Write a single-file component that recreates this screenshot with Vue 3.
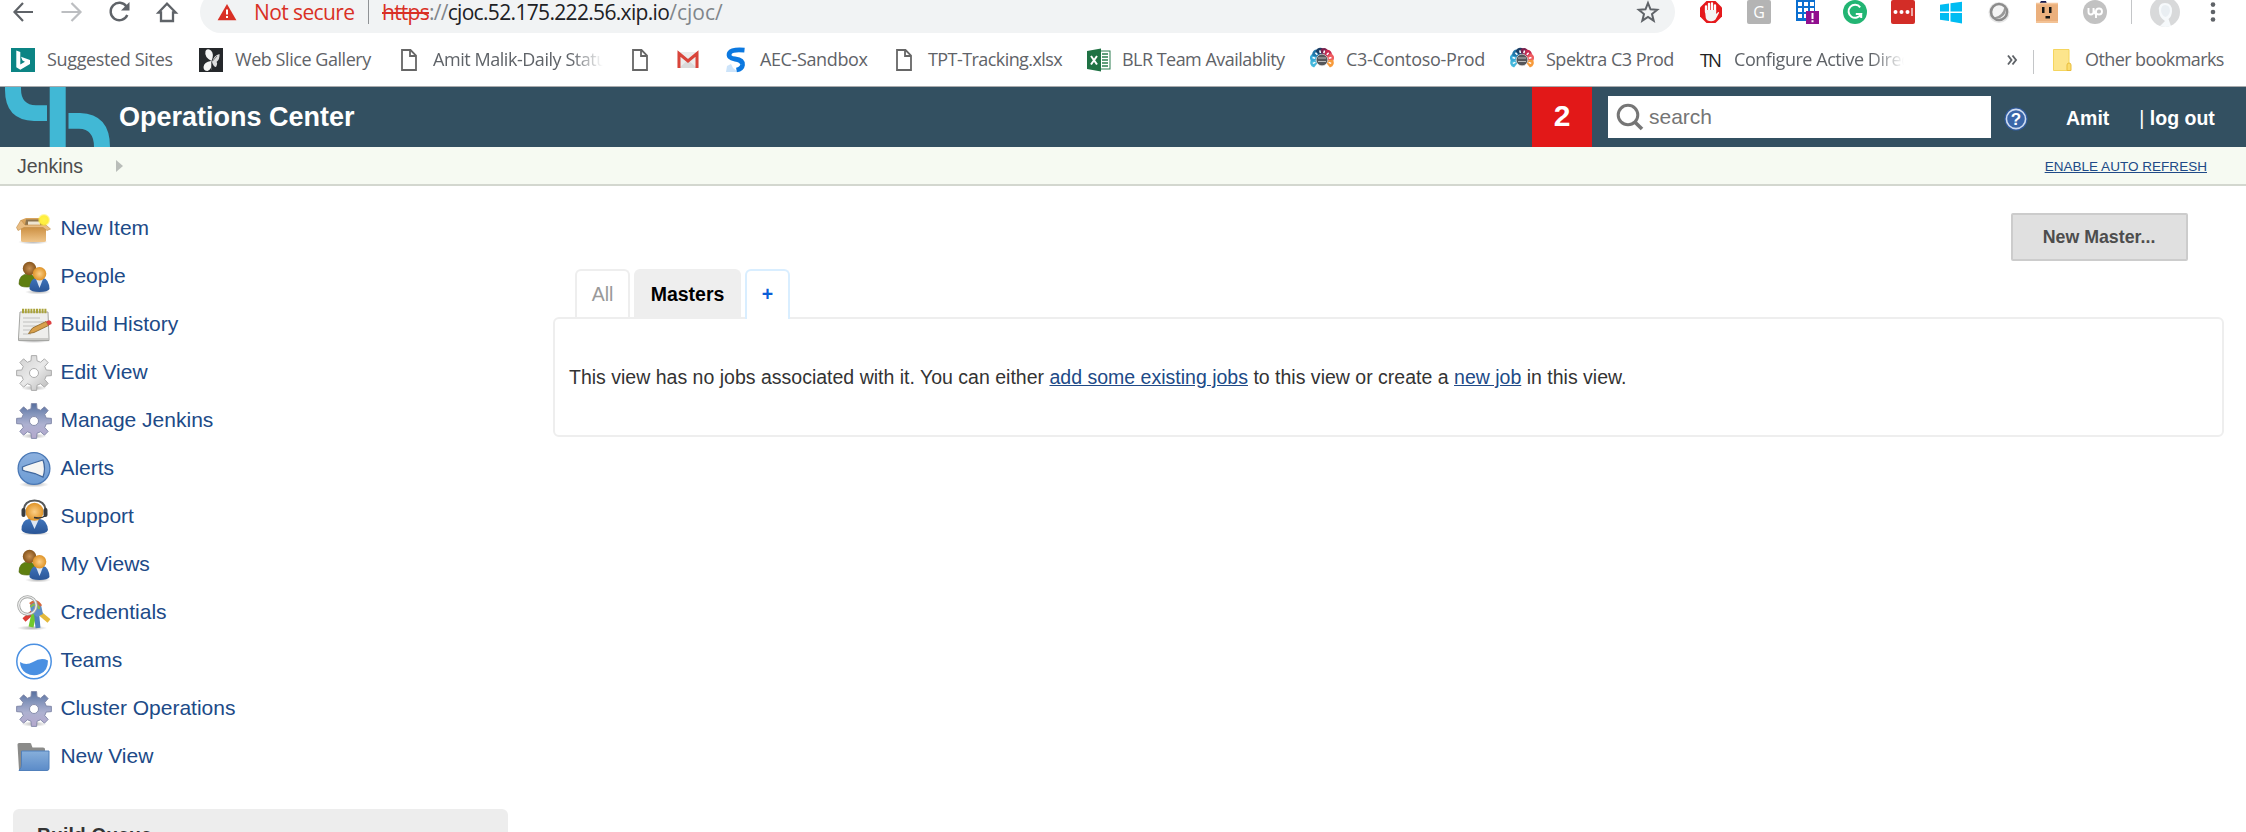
<script setup>
const bookmarks = [
  { icon: 'bing', label: 'Suggested Sites', width: 188, pad: 12, ls: -0.35 },
  { icon: 'butterfly', label: 'Web Slice Gallery', width: 198, pad: 12, ls: -0.45 },
  { icon: 'page', label: 'Amit Malik-Daily Status', width: 231, pad: 12, fade: 170, ls: -0.45 },
  { icon: 'page', label: '', width: 48, pad: 0, ls: 0 },
  { icon: 'gmail', label: '', width: 48, pad: 0, ls: 0 },
  { icon: 'swirl', label: 'AEC-Sandbox', width: 168, pad: 12, ls: -0.38 },
  { icon: 'page', label: 'TPT-Tracking.xlsx', width: 195, pad: 12, ls: -0.57 },
  { icon: 'excel', label: 'BLR Team Availablity', width: 223, pad: 11, ls: -0.53 },
  { icon: 'c3', label: 'C3-Contoso-Prod', width: 200, pad: 12, ls: -0.27 },
  { icon: 'c3', label: 'Spektra C3 Prod', width: 189, pad: 12, ls: -0.5 },
  { icon: 'tn', label: 'Configure Active Directory', width: 306, pad: 11, fade: 170, ls: -0.45 },
]

const tasks = [
  { icon: 'box', label: 'New Item' },
  { icon: 'people', label: 'People' },
  { icon: 'notepad', label: 'Build History' },
  { icon: 'gear', label: 'Edit View', fill: 'url(#gearGrey)', stroke: '#a5a5a5' },
  { icon: 'gear', label: 'Manage Jenkins', fill: 'url(#gearBlue)', stroke: '#7f86a6' },
  { icon: 'alert', label: 'Alerts' },
  { icon: 'support', label: 'Support' },
  { icon: 'people', label: 'My Views' },
  { icon: 'keys', label: 'Credentials' },
  { icon: 'teams', label: 'Teams' },
  { icon: 'gear', label: 'Cluster Operations', fill: 'url(#gearBlue)', stroke: '#7f86a6' },
  { icon: 'folder', label: 'New View' },
]

function gearPath() {
  const pts = []
  for (let i = 0; i < 8; i++) {
    const a = (i * Math.PI) / 4 - Math.PI / 2
    for (const [d, r] of [[-0.24, 12.6], [-0.15, 17.6], [0.15, 17.6], [0.24, 12.6]]) {
      pts.push(`${(18 + r * Math.cos(a + d)).toFixed(2)} ${(18 + r * Math.sin(a + d)).toFixed(2)}`)
    }
  }
  return `M${pts.join('L')}ZM22.5 18A4.5 4.5 0 1 0 13.5 18A4.5 4.5 0 1 0 22.5 18Z`
}
const gear = gearPath()
const petals = [
  [-110, '#45b8dc'], [-75, '#36a9d8'], [-42, '#2176a8'], [-13, '#1b3f66'],
  [15, '#7a1f4c'], [43, '#c52850'], [75, '#ef5a5f'], [110, '#f79a3a'],
]
</script>

<template>
  <div class="window">
    <svg class="defs" width="0" height="0">
      <defs>
        <linearGradient id="gearGrey" x1="0" y1="0" x2="1" y2="1"><stop offset="0" stop-color="#cfcfcf" /><stop offset=".5" stop-color="#e9e9e9" /><stop offset="1" stop-color="#b5b5b5" /></linearGradient>
        <linearGradient id="gearBlue" x1="0" y1="0" x2="0" y2="1"><stop offset="0" stop-color="#566f9f" /><stop offset=".28" stop-color="#8293ba" /><stop offset=".6" stop-color="#adb1d0" /><stop offset="1" stop-color="#b5a8cd" /></linearGradient>
        <linearGradient id="boxFront" x1="0" y1="0" x2="0" y2="1"><stop offset="0" stop-color="#c98b3c" /><stop offset="1" stop-color="#efc58a" /></linearGradient>
        <linearGradient id="suit" x1="0" y1="0" x2="0" y2="1"><stop offset="0" stop-color="#3f74bb" /><stop offset="1" stop-color="#2a5596" /></linearGradient>
        <linearGradient id="folderFront" x1="0" y1="0" x2="0" y2="1"><stop offset="0" stop-color="#87afdb" /><stop offset="1" stop-color="#5b8bc8" /></linearGradient>
        <linearGradient id="alertBlue" x1="0" y1="0" x2="0" y2="1"><stop offset="0" stop-color="#8db1df" /><stop offset="1" stop-color="#6d9cd4" /></linearGradient>
        <radialGradient id="skin"><stop offset="0" stop-color="#fccf86" /><stop offset="1" stop-color="#df9327" /></radialGradient>
        <radialGradient id="skinDark"><stop offset="0" stop-color="#c89154" /><stop offset="1" stop-color="#87551c" /></radialGradient>
        <radialGradient id="spark"><stop offset="0" stop-color="#fff34a" /><stop offset=".65" stop-color="#ffee3c" /><stop offset="1" stop-color="#ffee3c" stop-opacity="0" /></radialGradient>
        <radialGradient id="shade"><stop offset="0" stop-color="#000" stop-opacity=".3" /><stop offset="1" stop-color="#000" stop-opacity="0" /></radialGradient>
      </defs>
    </svg>

    <div class="toolbar">
      <div class="nav">
        <svg viewBox="0 0 24 24"><path d="M22 12H4M12 3L3.500 12L12 21" fill="none" stroke="#5f6368" stroke-width="2.200" /></svg>
        <svg viewBox="0 0 24 24"><path d="M2.500 12H21M12.500 3L21.500 12L12.500 21" fill="none" stroke="#bcbec1" stroke-width="2.200" /></svg>
        <svg viewBox="0 0 24 24"><path d="M19.500 6.500A8.700 8.700 0 1 0 20.300 15" fill="none" stroke="#5f6368" stroke-width="2.400" /><path d="M22.500 2V10.500H14Z" fill="#5f6368" /></svg>
        <svg viewBox="0 0 24 24"><path d="M3.500 12.500H6V21H18V12.500H20.700L12 3.700Z" fill="none" stroke="#5f6368" stroke-width="2.300" /></svg>
      </div>
      <div class="omnibox">
        <svg class="warn" viewBox="0 0 20 18" width="20" height="18"><path d="M10 1L19.400 17.200H.6Z" fill="#d93025" /><path d="M10 6.500V11.500M10 13V15" stroke="#fff" stroke-width="2" /></svg>
        <span class="insecure">Not secure</span>
        <i class="sep"></i>
        <span class="url"><s>https</s><span class="dim protocol">://</span><span class="host">cjoc.52.175.222.56.xip.io</span><span class="dim path">/cjoc/</span></span>
        <svg class="star" viewBox="0 0 24 24" width="24" height="24"><path d="M12 3L14.500 9.300L21.200 9.800L16 14.100L17.700 20.700L12 17L6.300 20.700L8 14.100L2.800 9.800L9.500 9.300Z" fill="none" stroke="#5f6368" stroke-width="2" /></svg>
      </div>
      <div class="extensions">
        <svg viewBox="0 0 24 24"><path d="M7.500 1H16.500L23 7.500V16.500L16.500 23H7.500L1 16.500V7.500Z" fill="#e5191c" /><path d="M7 12V6.500M10 11V4M13 11V3.500M16 12V5.500" stroke="#fff" stroke-width="2.300" stroke-linecap="round" /><path d="M5.900 10H17.100V14L19 12.200Q20.300 11.600 20 13L16.500 19.500Q15 21.500 12 21.300Q8 21.300 6.800 18Z" fill="#f4f4f4" /></svg>
        <svg viewBox="0 0 24 24"><rect width="24" height="24" rx="2" fill="#b4b4b4" /><text x="12" y="18" text-anchor="middle" font-size="16" fill="#fff">G</text></svg>
        <svg viewBox="0 0 24 24"><rect x="1" y="-2" width="19" height="23" fill="#0b6fd0" /><path d="M3 2H7V6H3ZM9 2H13V6H9ZM15 2H19V6H15ZM3 8H7V12H3ZM9 8H13V12H9ZM15 8H19V12H15ZM3 14H7V18H3ZM9 14H13V18H9Z" fill="#fff" /><rect x="11" y="11" width="13" height="13" fill="#90108f" /><path d="M17.500 13V19M17.500 20.300V22.300" stroke="#fff" stroke-width="2" /></svg>
        <svg viewBox="0 0 24 24"><circle cx="12" cy="12" r="12" fill="#22b573" /><path d="M17.200 7.300A6.500 6.500 0 1 0 18 14H12.800M18.200 18V14" fill="none" stroke="#fff" stroke-width="2" /></svg>
        <svg viewBox="0 0 24 24"><rect width="24" height="24" rx="2" fill="#d32d27" /><circle cx="4.500" cy="12" r="2" fill="#fff" /><circle cx="10.500" cy="12" r="2" fill="#fff" /><circle cx="16.500" cy="12" r="2" fill="#fff" /><path d="M21 8V16" stroke="#fff" stroke-width="1.200" /></svg>
        <svg viewBox="0 0 24 24"><path d="M1 4.800L10 3.500V11.500H1ZM11.500 3.300L23 1.800V11.500H11.500ZM1 13H10V21L1 19.800ZM11.500 13H23V23.500L11.500 21.500Z" fill="#00bcf2" /></svg>
        <svg viewBox="0 0 24 24"><circle cx="12" cy="12.500" r="10.500" fill="#e6e6e6" /><circle cx="12" cy="12" r="8" fill="#f4f4f4" stroke="#8c8c8c" stroke-width="2.600" /><path d="M17.500 6.500A8 8 0 0 1 7 17.500Q16 16 17.500 6.500Z" fill="#999" /></svg>
        <svg viewBox="0 0 24 24"><path d="M4 4L6 1H11L12 4Z" fill="#15184f" /><rect x="1" y="3.500" width="22" height="19.500" fill="#ebb07d" /><path d="M1 3.500H23M1 22H23" stroke="#f6c79d" stroke-width="1.500" /><path d="M7 7H9.500V13H7ZM14 7H16.500V13H14ZM10.500 16H15V18.500H10.500Z" fill="#151515" /></svg>
        <svg viewBox="0 0 24 24"><circle cx="12" cy="12" r="12" fill="#c2c2c2" /><path d="M5.500 8V12A2.500 2.500 0 0 0 10.500 12V8Q11 13.500 13 14.500M13 18V11.500A3 3 0 1 1 16 14.500Q14 14.500 13 13" fill="none" stroke="#fff" stroke-width="1.900" /></svg>
      </div>
      <i class="sep ext-sep"></i>
      <svg class="avatar" viewBox="0 0 30 30" width="30" height="30"><circle cx="15" cy="15" r="15" fill="#d8d9da" /><path d="M9 14Q8 6 15 6Q22 6 22 14Q22 19 18.500 22L21 29Q15 31 10 29L15 24Q9 20 9 14Z" fill="#f6f9fb" /><path d="M11 14Q11 8 15 8Q20 8 20 14Q19 19 15.500 20Q12 19 11 14Z" fill="#e9eef2" /></svg>
      <svg class="dots" viewBox="0 0 6 24" width="6" height="24"><g fill="#5f6368"><circle cx="3" cy="4.600" r="2.300" /><circle cx="3" cy="12" r="2.300" /><circle cx="3" cy="19.500" r="2.300" /></g></svg>
    </div>

    <div class="bookmarks">
      <div v-for="(b, i) in bookmarks" :key="i" class="bookmark" :style="{ width: b.width + 'px', gap: b.pad + 'px' }">
        <svg class="favicon" viewBox="0 0 24 24">
          <template v-if="b.icon === 'bing'"><rect width="24" height="24" fill="#0c8484" /><path d="M5.300 2.500L9.300 4V16.500L14 13.800L11.500 12.600L10 8.800L19 12V16L9.300 21.700L5.300 19.300Z" fill="#fff" /></template>
          <template v-else-if="b.icon === 'butterfly'"><rect width="24" height="24" fill="#25282b" /><path d="M12.500 13Q5 9 6.500 3Q8 0 12 2.500Q15.500 6 12.500 13ZM12 13Q5 14 4.500 19Q4.500 23 8.500 23Q13.500 21 12.500 13Z" fill="#f4f4f4" /><path d="M13 14Q15 7 20.500 6Q21 11 17.500 14Q19 15 17 19Q14.500 19 13 14Z" fill="#ddd" /><path d="M13.500 13L18 8M12.500 14V22" stroke="#555" stroke-width=".8" /></template>
          <path v-else-if="b.icon === 'page'" d="M5 2H13.500L19 7.500V22H5ZM13 2.500V8H18.500" fill="none" stroke="#666" stroke-width="1.800" />
          <template v-else-if="b.icon === 'gmail'"><rect x="1.500" y="4" width="21" height="16" rx="1.500" fill="#ececec" /><path d="M3 20L12 12L21 20Z" fill="#dadada" /><path d="M3 20V5.500L12 13L21 5.500V20" fill="none" stroke="#d9443a" stroke-width="3" /></template>
          <template v-else-if="b.icon === 'swirl'"><path d="M2 24L3 18L7 16L9 20L14 24Z" fill="#cde4fa" /><path d="M20.500 2.200Q8 1 5.500 5Q3.500 10 11 11Q19 12 18.500 17Q18 21 12.500 22" fill="none" stroke="#0b78e0" stroke-width="4.800" /></template>
          <template v-else-if="b.icon === 'excel'"><rect x="12" y="3" width="11" height="18" fill="#fff" stroke="#2c7d50" /><path d="M15 6H21M15 9H21M15 12H21M15 15H21M15 18H21" stroke="#2c7d50" stroke-width="1.700" /><path d="M0 3L14 .5V23.500L0 21Z" fill="#1f7244" /><path d="M4 8L10 16.500M10 8L4 16.500" stroke="#fff" stroke-width="2" /></template>
          <g v-else-if="b.icon === 'c3'" transform="translate(12 12)">
            <path v-for="p in petals" :key="p[0]" d="M0 -3L-4.300 -10Q0 -14.800 4.300 -10Z" :fill="p[1]" :transform="`rotate(${p[0]})`" />
            <path v-for="p in petals" :key="'d' + p[0]" d="M0 -7V-9.800" stroke="#fff" stroke-width="1.500" :transform="`rotate(${p[0]})`" />
            <circle r="5.800" fill="#55565a" stroke="#ddd" stroke-width=".7" /><path d="M-4 -2H4M-4 1.500H4" stroke="#bbb" />
          </g>
          <text v-else x="12" y="18.500" text-anchor="middle" font-size="18.500" fill="#222" textLength="22">TN</text>
        </svg>
        <span v-if="b.label" class="label" :class="{ fade: b.fade }" :style="{ letterSpacing: b.ls + 'px' }">{{ b.label }}</span>
      </div>
      <svg class="more" viewBox="0 0 12 12" width="12" height="12"><path d="M2 1.500L5.500 6L2 10.500M6.500 1.500L10 6L6.500 10.500" fill="none" stroke="#5f6368" stroke-width="1.900" /></svg>
      <i class="sep bm-sep"></i>
      <svg class="folder" viewBox="0 0 20 24" width="20" height="24"><path d="M1.500 1.500H17V22.500H1.500Z" fill="#fde58c" stroke="#f5d55e" /><path d="M15 22.500V17Q15 15 17 15Q19 15 19 17V22.500Z" fill="#fbdc6d" stroke="#e9bd3c" /></svg>
      <span class="label other">Other bookmarks</span>
    </div>

    <header class="header">
      <svg class="logo" viewBox="0 0 120 60" width="120" height="60"><g fill="#41b8d5"><path d="M5 0H21V2Q21 18 36 18.300H47V34H34Q5 33 5 3Z" /><rect x="49.700" width="16" height="60" /><path d="M68.500 26H80Q110 27 110 60H94Q94 42 79 41.700H68.500Z" /></g></svg>
      <span class="title">Operations Center</span>
      <span class="count">2</span>
      <div class="search">
        <svg viewBox="0 0 28 28" width="28" height="28"><circle cx="12" cy="12" r="9.800" fill="none" stroke="#767676" stroke-width="3" /><path d="M18.800 19L26 26" stroke="#767676" stroke-width="3.700" /></svg>
        <span>search</span>
      </div>
      <svg class="help" viewBox="0 0 24 24" width="24" height="24"><circle cx="12" cy="12" r="11.500" fill="#315b9d" /><circle cx="12" cy="12" r="9.600" fill="#3a66a8" stroke="#cfdcf0" stroke-width="1.600" /><text x="12" y="18" text-anchor="middle" font-size="17" font-weight="bold" fill="#fff">?</text></svg>
      <span class="user">Amit</span>
      <span class="logout"><span class="bar">|</span> log out</span>
    </header>

    <div class="crumbs">
      <span class="crumb">Jenkins</span>
      <svg viewBox="0 0 7 12" width="7" height="12"><path d="M0 0L7 6L0 12Z" fill="#b9bdb9" /></svg>
      <a class="refresh">ENABLE AUTO REFRESH</a>
    </div>

    <div class="body">
      <aside class="side">
        <a v-for="t in tasks" :key="t.label" class="task">
          <svg viewBox="0 0 36 36" width="36" height="36">
            <template v-if="t.icon === 'box'">
              <ellipse cx="17" cy="31" rx="15" ry="2.500" fill="url(#shade)" />
              <path d="M5 9L10 7H26L30 10V16H5Z" fill="#d9a45d" /><path d="M10 8.500H26L27 14H9Z" fill="#8d744f" /><path d="M12 10.500H24V14H12Z" fill="#eee4d0" />
              <path d="M5 15H30V29.500Q30 31 28 31H7Q5 31 5 29.500Z" fill="url(#boxFront)" /><path d="M5 9L9 14H30L34.500 18L31 19.500L27 16.500H8L2 19.500L.5 16.500Z" fill="#e9bd82" stroke="#c08b48" stroke-width=".6" />
              <circle cx="28" cy="9" r="6.500" fill="url(#spark)" />
            </template>
            <template v-else-if="t.icon === 'people'">
              <ellipse cx="22" cy="33" rx="13" ry="2.500" fill="url(#shade)" />
              <path d="M3 25Q3 15 12 15Q20 15 20 25Q19 28 11 28Q4 28 3 25Z" fill="#5f7f10" stroke="#4b6508" stroke-width=".6" /><circle cx="13.500" cy="9.500" r="6.700" fill="url(#skinDark)" />
              <path d="M13.500 30Q13.500 20 20 19H27Q33 20 33.500 30Q32 33 23.500 33Q15 33 13.500 30Z" fill="url(#suit)" /><path d="M20 20H27L23.500 29Z" fill="#dce6f4" /><circle cx="23.500" cy="14.800" r="6.800" fill="url(#skin)" />
            </template>
            <template v-else-if="t.icon === 'notepad'">
              <ellipse cx="18" cy="34" rx="17" ry="2" fill="url(#shade)" />
              <path d="M4 5H32L33 31V33.500H2.500V31Z" fill="#eeeeec" stroke="#a5a6a3" /><path d="M3 32H33" stroke="#bdbdba" stroke-width="1.500" /><path d="M6 4H31" stroke="#aaa33b" stroke-width="4.500" stroke-dasharray="2 .8" />
              <path d="M7 11H24M7 15H28M7 19H22M7 23H17M7 27H15" stroke="#c0c0be" stroke-width="1.200" />
              <path d="M12.500 26.500L16.500 21L30 14.500L32.500 18.500L18 25.500Z" fill="#d8a04c" stroke="#8c6221" stroke-width=".8" /><path d="M30 14.500L33 13.200Q36 14 35.500 17L32.500 18.500Z" fill="#dd4141" />
            </template>
            <template v-else-if="t.icon === 'gear'">
              <ellipse cx="18" cy="33" rx="13" ry="2.800" fill="url(#shade)" />
              <path :d="gear" :fill="t.fill" :stroke="t.stroke" stroke-width=".9" stroke-linejoin="round" fill-rule="evenodd" />
            </template>
            <template v-else-if="t.icon === 'alert'">
              <ellipse cx="18" cy="33.500" rx="15" ry="3" fill="url(#shade)" />
              <circle cx="18" cy="17.500" r="15.900" fill="url(#alertBlue)" stroke="#4a78b5" stroke-width="1.300" /><path d="M6.500 16L10 14.500L19 11.500L27 9Q30 17.500 27 26L19 22.500L10 20.500L6.500 19Z" fill="#f5f5f3" stroke="#41689e" stroke-width="1.300" />
            </template>
            <template v-else-if="t.icon === 'support'">
              <ellipse cx="19" cy="34.500" rx="15" ry="2" fill="url(#shade)" />
              <path d="M5.500 31Q5.500 21 13 20H24Q31 21 32 31Q31 35 19 35Q7 35 5.500 31Z" fill="url(#suit)" /><path d="M14.500 21H22.500L18.500 30Z" fill="#dce6f4" /><circle cx="18.500" cy="12.800" r="9" fill="url(#skin)" />
              <path d="M7.500 12Q8 1.500 18.500 1.500Q29 1.500 30 12" fill="none" stroke="#55585a" stroke-width="2" /><rect x="5.500" y="9" width="4" height="9" rx="2" fill="#3a3c3e" /><rect x="27.500" y="9" width="4" height="9" rx="2" fill="#3a3c3e" /><path d="M29 17Q25 20 18 18.500" fill="none" stroke="#333" stroke-width="1.500" />
            </template>
            <template v-else-if="t.icon === 'keys'">
              <ellipse cx="16" cy="33" rx="15" ry="2.500" fill="url(#shade)" />
              <path d="M18 16L8 25" stroke="#dc3d36" stroke-width="4.500" /><path d="M20 15L33 26" stroke="#e4b93b" stroke-width="4.500" />
              <path d="M19 14L15 32" stroke="#71c82d" stroke-width="5" /><path d="M20 13L22 33" stroke="#4d7fbd" stroke-width="5" />
              <path d="M14 10Q19 3 25 10L27 19L21 22L15 17Z" fill="#5e8dc8" /><path d="M14 9Q20 3 25 11" fill="none" stroke="#d76a3c" stroke-width="2.500" /><path d="M14.500 12Q20 6 23.500 14" fill="none" stroke="#8abd48" stroke-width="2" />
              <circle cx="11.500" cy="10.500" r="8.800" fill="none" stroke="#a3a5a3" stroke-width="3" /><circle cx="11.500" cy="10.500" r="8.800" fill="none" stroke="#eee" stroke-width="1.300" />
            </template>
            <template v-else-if="t.icon === 'teams'">
              <circle cx="18" cy="18.500" r="17.200" fill="#fff" stroke="#4a90e2" stroke-width="1.500" /><path d="M4 19Q10 23 17 19Q25 14 32 17.500Q32 28 24 31Q17 34 10 30Q4 26 4 19Z" fill="#4a90e2" />
            </template>
            <template v-else>
              <path d="M1.500 5.500Q1.500 4 3 4H14Q15.500 4 15.500 6L16.500 8.500H27Q29 8.500 29 10V31H3Z" fill="#8b8b89" /><path d="M5.500 12H33V29.500Q33 31.500 31 31.500H3Q5.500 29 5.500 26Z" fill="url(#folderFront)" stroke="#5180bb" />
            </template>
          </svg>
          <span>{{ t.label }}</span>
        </a>
        <div class="queue">Build Queue</div>
      </aside>

      <main class="main">
        <button class="new-master">New Master...</button>
        <div class="tabs">
          <a class="tab all">All</a>
          <a class="tab active">Masters</a>
          <a class="tab add">+</a>
        </div>
        <div class="panel">This view has no jobs associated with it. You can either <a>add some existing jobs</a> to this view or create a <a>new job</a> in this view.</div>
      </main>
    </div>
  </div>
</template>

<style>
body { margin: 0; background: #fff; overflow: hidden; }
</style>

<style scoped>
* { box-sizing: border-box; }
.window { display: flex; flex-direction: column; width: 2246px; height: 832px; overflow: hidden; background: #fff; font-family: "Liberation Sans", Arial, sans-serif; font-size: 19.5px; color: #333; white-space: nowrap; }
.defs { position: absolute; }
svg { flex: none; display: block; overflow: visible; }
.sep { flex: none; width: 1px; height: 24px; background: #c4c6c8; }

.toolbar { display: flex; align-items: center; height: 42px; margin-top: -9px; flex: none; font-family: "Open Sans", "Noto Sans", sans-serif; }
.nav { display: flex; width: 200px; padding-left: 10.5px; gap: 24.2px; }
.nav svg, .extensions svg { width: 24px; height: 24px; }
.omnibox { display: flex; align-items: center; width: 1475px; height: 42px; border-radius: 21px; background: #f1f3f4; padding: 0 15px 0 17px; font-size: 21px; line-height: 42px; }
.insecure { width: 113px; margin-left: 17px; color: #d93025; letter-spacing: -0.6px; }
.omnibox .sep { background: #8f9295; margin-left: 1px; }
.url { margin-left: 13px; letter-spacing: -0.75px; color: #202124; }
.url s { color: #d93025; }
.dim { color: #80868b; }
.host { letter-spacing: -0.67px; }
.path { letter-spacing: 0; }
.star { margin-left: auto; }
.extensions { display: flex; gap: 24px; margin-left: 24px; }
.ext-sep { margin-left: 24px; }
.avatar { margin-left: 18px; }
.dots { margin-left: 30px; }

.bookmarks { display: flex; align-items: center; flex: none; height: 54px; padding: 0 0 0 11px; border-bottom: 1px solid #a9abad; font-family: "Open Sans", "Noto Sans", sans-serif; font-size: 18px; color: #5f6368; }
.bookmark { display: flex; align-items: center; flex: none; }
.favicon { width: 24px; height: 24px; }
.label { line-height: 26px; margin-bottom: 2px; }
.fade { width: 170px; overflow: hidden; mask-image: linear-gradient(to right, #000 138px, transparent 170px); }
.more { margin-left: 1px; }
.bm-sep { margin-left: 15px; position: relative; top: 2px; }
.folder { margin-left: 18px; }
.other { margin-left: 13px; letter-spacing: -0.6px; }

.header { display: flex; align-items: center; flex: none; height: 60px; background: #335061; color: #fff; font-weight: bold; }
.title { width: 1413px; margin-left: -1px; font-size: 27px; line-height: 60px; }
.count { width: 60px; line-height: 58px; height: 60px; background: #e21818; text-align: center; font-size: 30px; }
.search { display: flex; align-items: center; width: 383px; height: 42px; margin-left: 16px; padding-left: 8px; gap: 5px; background: #fff; color: #757575; font-size: 21px; font-weight: normal; }
.help { margin-left: 13px; position: relative; top: 2px; }
.user { margin-left: 38px; padding-top: 3px; }
.logout { margin-left: 30px; padding-top: 3px; }
.bar { font-weight: normal; }

.crumbs { display: flex; align-items: center; flex: none; height: 39px; padding: 0 39px 0 17px; background: #f6faf2; border-bottom: 2px solid #d3d7cf; color: #4d4d4d; }
.crumb { padding-top: 1px; }
.crumbs svg { margin-left: 33px; }
.refresh { margin-left: auto; padding-top: 2px; font-size: 13.55px; color: #204a87; text-decoration: underline; }

.body { display: flex; flex: 1; min-height: 0; }
.side { display: flex; flex-direction: column; width: 553px; padding: 25px 45px 0 13px; }
.task { display: flex; align-items: center; flex: none; height: 36px; margin-bottom: 12px; padding-left: 3px; gap: 8.4px; font-size: 21px; line-height: 30px; color: #204a87; }
.task span { margin-top: -3px; }
.queue { flex: none; height: 60px; margin-top: 22px; padding: 14px 24px; border-radius: 6px; background: #ededed; font-weight: bold; line-height: 24px; }
.main { display: flex; flex-direction: column; width: 1671px; padding-top: 27px; }
.new-master { align-self: flex-end; width: 177px; height: 48px; margin-right: 36px; border: 2px solid #ccc; border-radius: 2px; padding: 0 1px 0 0; background: #e0e0e0; color: #4d4d4d; font: bold 17.8px "Liberation Sans", Arial, sans-serif; }
.tabs { position: relative; z-index: 1; display: flex; gap: 4px; height: 48px; margin: 8px 0 0 22px; }
.tab { height: 48px; border: 2px solid #eee; border-bottom: 0; border-radius: 6px 6px 0 0; line-height: 46px; text-align: center; color: #999; }
.tab.all { width: 55px; }
.tab.active { height: 50px; width: 107px; background: #eee; color: #000; font-weight: bold; }
.tab.add { height: 50px; width: 45px; background: #fff; border-color: #d9eeff; color: #0b5ed7; font-weight: bold; }
.panel { height: 120px; padding: 0 14px; border: 2px solid #eee; border-radius: 6px; line-height: 116px; letter-spacing: 0.005px; }
.panel a { color: #204a87; text-decoration: underline; }
</style>
